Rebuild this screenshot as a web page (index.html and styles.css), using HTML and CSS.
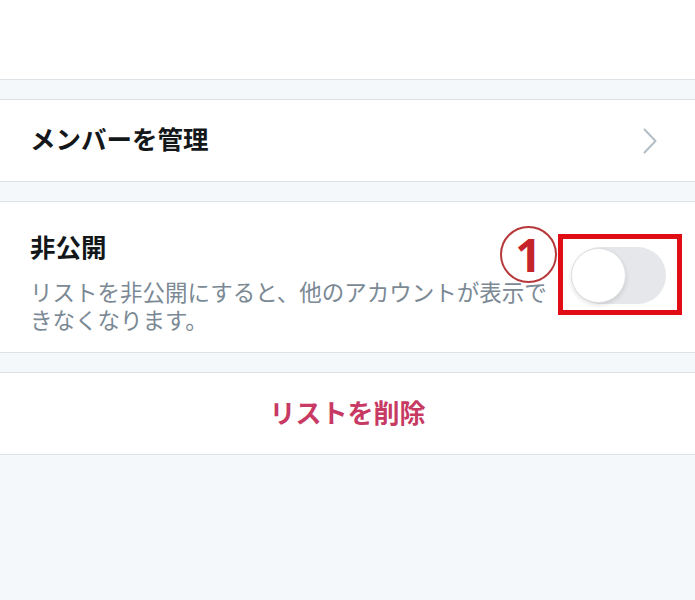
FILE: index.html
```html
<!DOCTYPE html>
<html lang="ja">
<head>
  <meta charset="UTF-8" />
  <meta name="viewport" content="width=device-width, initial-scale=1" />
  <title>リストの編集</title>
  <link rel="stylesheet" href="styles.css">
</head>
<body>

<div class="top-bar"></div>

<section class="group">
  <div class="row row-link">
    <span class="row-title">メンバーを管理</span>
    <svg class="chevron" width="14" height="26" viewBox="0 0 14 26">
      <path d="M1.5 1.5 L12.5 13 L1.5 24.5" fill="none" stroke="#b3bec6" stroke-width="2" stroke-linecap="round" stroke-linejoin="round"/>
    </svg>
  </div>
</section>

<section class="group">
  <div class="row row-private">
    <div class="private-text">
      <div class="row-title">非公開</div>
      <p class="row-desc">リストを非公開にすると、他のアカウントが表示できなくなります。</p>
    </div>
    <div class="switch-wrap">
      <div class="switch"><span class="knob"></span></div>
      <div class="mark-box"></div>
      <div class="mark-num">1</div>
    </div>
  </div>
</section>

<section class="group">
  <div class="row row-danger">
    <span class="danger-label">リストを削除</span>
  </div>
</section>

</body>
</html>
```

FILE: styles.css
```css
:root {
  --bg: #f5f8fa;
  --line: #dde2e6;
  --text: #14171a;
  --muted: #7b8995;
  --danger: #c73a63;
  --mark: #e10d14;
}

* {
  box-sizing: border-box;
  margin: 0;
  padding: 0;
}

body {
  background: var(--bg);
  color: var(--text);
  font-family: 'Noto Sans CJK JP', 'Noto Sans', sans-serif;
}

.top-bar {
  height: 80px;
  background: #fff;
  border-bottom: 1px solid var(--line);
}

.group {
  margin-top: 19px;
  background: #fff;
  border-top: 1px solid var(--line);
  border-bottom: 1px solid var(--line);
}

.row {
  display: flex;
  align-items: center;
  padding: 0 38px 0 30px;
}

.row-link {
  height: 81px;
  justify-content: space-between;
}

.row-link .row-title {
  padding-bottom: 5px;
}

.row-title {
  font-size: 25.5px;
  font-weight: 700;
  line-height: 34px;
}

.chevron {
  display: block;
}

.row-private {
  height: 150px;
  align-items: flex-start;
  padding-top: 27px;
  padding-right: 0;
}

.private-text {
  width: 530px;
}

.row-desc {
  margin-top: 14px;
  font-size: 22.5px;
  line-height: 28px;
  color: var(--muted);
}

.switch-wrap {
  position: relative;
  margin-left: 12px;
  margin-top: 18px;
}

.switch {
  width: 94px;
  height: 57px;
  border-radius: 29px;
  background: #e6e7ea;
  position: relative;
}

.knob {
  position: absolute;
  left: -1px;
  top: 1px;
  width: 55px;
  height: 55px;
  border-radius: 50%;
  background: #fff;
  border: 1px solid #dedfe2;
  box-shadow: 0 2px 4px rgba(0, 0, 0, 0.12);
}

.mark-box {
  position: absolute;
  left: -14px;
  top: -13px;
  width: 124px;
  height: 81px;
  border: 5px solid var(--mark);
}

.mark-num {
  position: absolute;
  left: -72px;
  top: -21px;
  width: 57px;
  height: 57px;
  border: 2px solid #b6383a;
  border-radius: 50%;
  color: #c4242a;
  font-family: 'Noto Sans', sans-serif;
  font-size: 46px;
  font-weight: 700;
  line-height: 52px;
  text-align: center;
}

.row-danger {
  height: 81px;
  justify-content: center;
  padding: 0 0 5px;
}

.danger-label {
  font-size: 26px;
  font-weight: 700;
  color: var(--danger);
}
```
